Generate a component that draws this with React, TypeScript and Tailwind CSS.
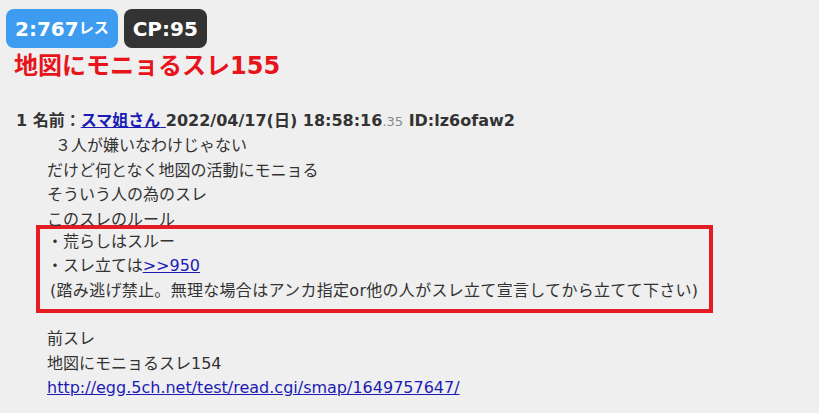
const font = { fontFamily: '"DejaVu Sans", "Noto Sans CJK JP", sans-serif' };

function Badges() {
  return (
    <div className="flex gap-1.5 pl-[6px] pt-[9px]">
      <div className="flex h-[39px] items-center rounded-lg bg-[#3d9cf0] px-[9px] font-bold text-white">
        <span className="text-[20px]">2:767</span>
        <span className="text-[15px]">レス</span>
      </div>
      <div className="flex h-[39px] items-center rounded-lg bg-[#333333] px-[9px] text-[20px] font-bold text-white">
        CP:95
      </div>
    </div>
  );
}

const rules = ['・荒らしはスルー'];

export default function App() {
  return (
    <div className="min-h-screen bg-[#efefef] text-[#333]" style={font}>
      <Badges />
      <h1 className="mt-1 pl-[14px] text-[24px] font-bold leading-[28px] text-[#e8141c]">
        地図にモニョるスレ155
      </h1>

      <div className="mt-[29px] pl-4 text-[16px] leading-[24.4px]">
        {/* post header */}
        <div className="font-bold">
          1 名前：
          <a href="#" className="text-[#1c1cb4] underline">
            スマ姐さん{' '}
          </a>
          2022/04/17(日) 18:58:16
          <span className="text-[13px] font-normal text-[#888]">.35</span> ID:lz6ofaw2
        </div>

        {/* post body */}
        <div className="pl-[31px]">
          <div className="pl-2">３人が嫌いなわけじゃない</div>
          <div>だけど何となく地図の活動にモニョる</div>
          <div>そういう人の為のスレ</div>
          <div>このスレのルール</div>
        </div>

        <div className="ml-5 mt-[-7px] w-[677px] border-4 border-[#e41c24] pb-[6px] pl-[7px] pt-px">
          {rules.map((r) => (
            <div key={r}>{r}</div>
          ))}
          <div>
            ・スレ立ては
            <a href="#" className="text-[#1c1cb4] underline">
              &gt;&gt;950
            </a>
          </div>
          <div className="pl-[3px] tracking-[0.3px]">
            (踏み逃げ禁止。無理な場合はアンカ指定or他の人がスレ立て宣言してから立てて下さい)
          </div>
        </div>

        <div className="mt-[14px] pl-[31px]">
          <div>前スレ</div>
          <div>地図にモニョるスレ154</div>
          <div>
            <a href="#" className="text-[#1c1cb4] underline">
              http://egg.5ch.net/test/read.cgi/smap/1649757647/
            </a>
          </div>
        </div>
      </div>
    </div>
  );
}
